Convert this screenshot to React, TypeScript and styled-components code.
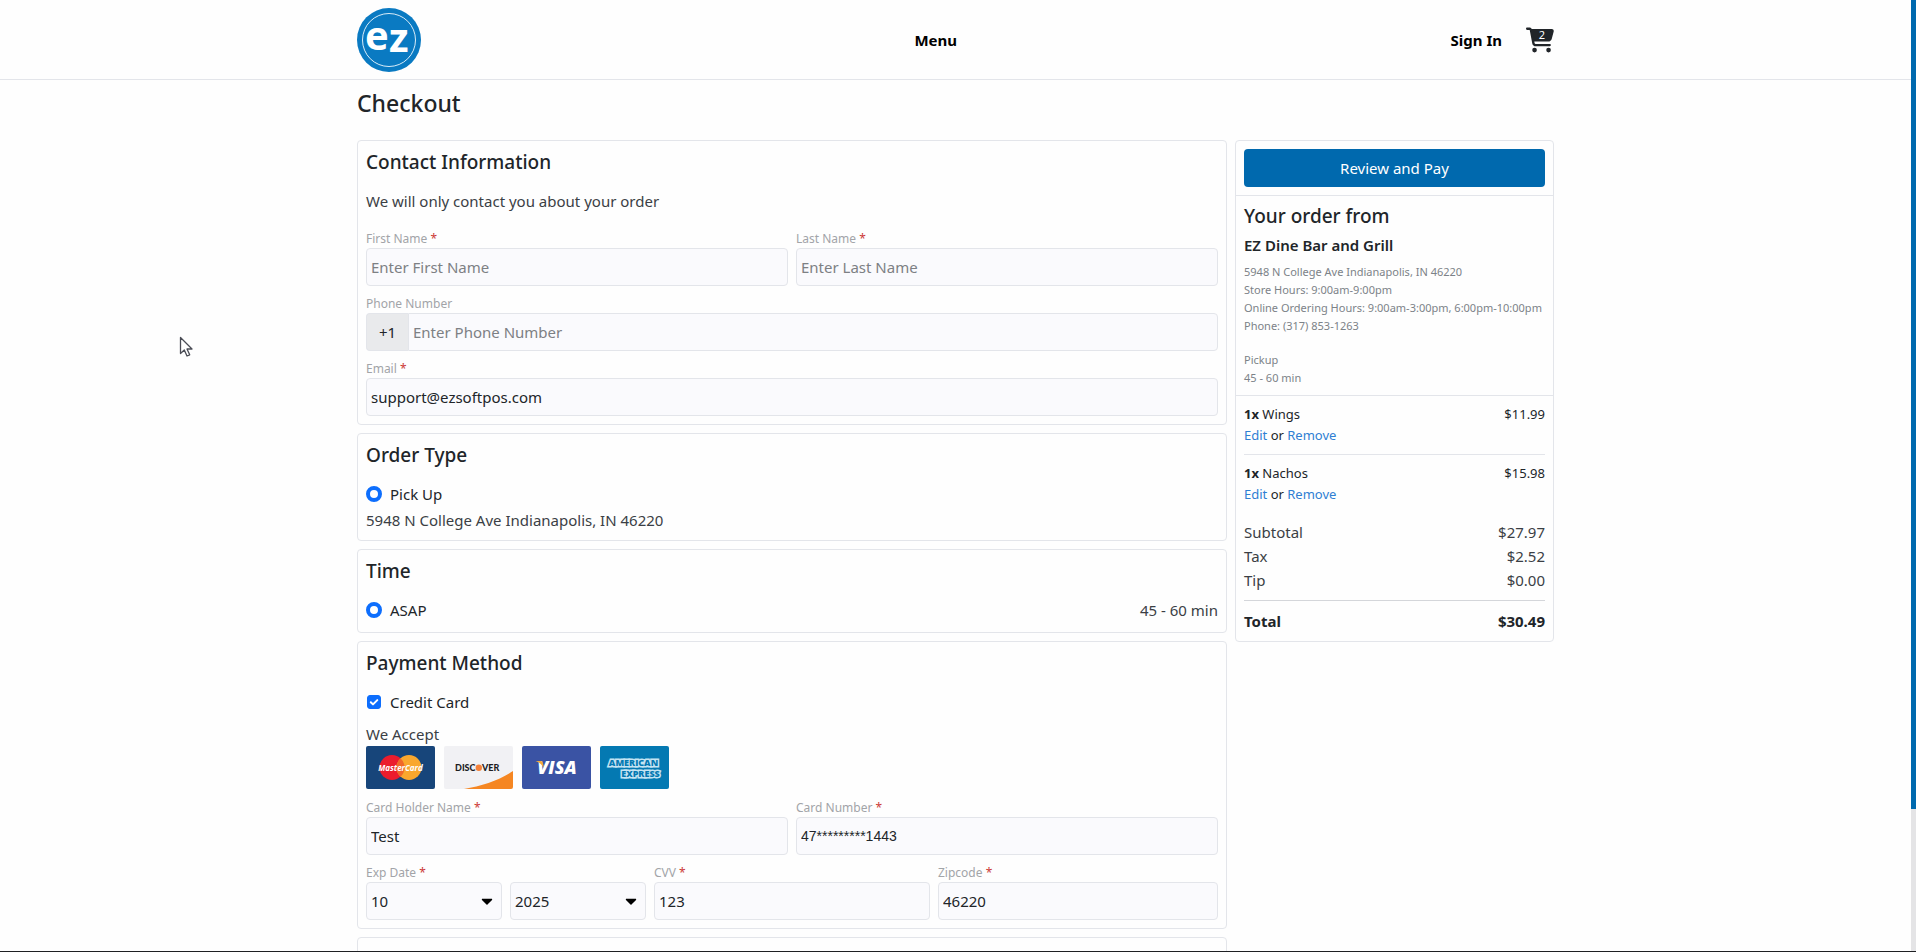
import React, { useState } from "react";
import styled, { createGlobalStyle } from "styled-components";
import { FaCartShopping } from "react-icons/fa6";
import { FaCaretDown } from "react-icons/fa";

const colors = {
  page: "#fefefe",
  line: "#e3e5ea",
  field: "#fafafd",
  ink: "#212529",
  body: "#3b3f45",
  muted: "#7c8288",
  label: "#a2a4a8",
  brand: "#0069ae",
  link: "#2f7fd3",
  blue: "#0d6efd",
  required: "#cc3a36",
};

const GlobalStyle = createGlobalStyle`
  *, *::before, *::after { box-sizing: border-box; }
  body {
    margin: 0;
    background: ${colors.page};
    color: ${colors.ink};
    font-family: "Noto Sans", "Open Sans", sans-serif;
    font-size: 15px;
    line-height: 24px;
  }
  h1, h2, h3, p { margin: 0; padding: 0; }
  button, input, select { font: inherit; color: inherit; }
`;

const Screen = styled.div`
  height: 100vh;
  overflow-y: auto;
  scrollbar-width: none;
  padding-right: 5px;
`;

const ScrollTrack = styled.div`
  position: fixed;
  top: 0;
  right: 0;
  bottom: 0;
  width: 5px;
  background: #e4e4e6;
`;

const ScrollThumb = styled.div`
  height: 85%;
  background: ${colors.brand};
`;

const BottomEdge = styled.div`
  position: fixed;
  left: 0;
  right: 0;
  bottom: 0;
  height: 1px;
  background: #1f2023;
`;

const Pointer = styled.svg`
  position: fixed;
  left: 179px;
  top: 336px;
  pointer-events: none;
`;

const Container = styled.div`
  max-width: 1197px;
  margin: 0 auto;
`;

const Header = styled.header`
  border-bottom: 1px solid ${colors.line};
`;

const HeaderRow = styled(Container)`
  display: flex;
  align-items: center;
  justify-content: space-between;
  height: 79px;
`;

const HomeLink = styled.a`
  display: block;
  height: 64px;
`;

const NavLink = styled.a`
  color: #000;
  font-weight: 700;
  text-decoration: none;
`;

const Account = styled.div`
  display: flex;
  align-items: center;
  gap: 24px;
`;

const CartButton = styled.button`
  position: relative;
  display: flex;
  padding: 0;
  border: 0;
  background: none;
  font-size: 28px;
  line-height: 24px;
  color: ${colors.ink};
`;

const CartCount = styled.span`
  position: absolute;
  top: 0;
  left: 0;
  right: 0;
  padding-left: 4px;
  text-align: center;
  font-size: 11px;
  line-height: 18px;
  color: #fff;
`;

const PageTitle = styled.h1`
  padding: 7px 0 21px;
  font-size: 23px;
  line-height: 32px;
  font-weight: 500;
`;

const Columns = styled.div`
  display: flex;
  align-items: flex-start;
  gap: 8px;
`;

const Main = styled.main`
  flex: 1;
  min-width: 0;
  display: flex;
  flex-direction: column;
  gap: 8px;
`;

const Card = styled.section`
  padding: 8px;
  border: 1px solid ${colors.line};
  border-radius: 4px;
`;

const EmptyCard = styled(Card)`
  min-height: 120px;
`;

const CardTitle = styled.h2`
  padding-top: 1px;
  margin-bottom: 15px;
  font-size: 19px;
  line-height: 24px;
  font-weight: 500;
`;

const Text = styled.p`
  color: ${colors.body};
`;

const FieldStack = styled.div<{ $top: number }>`
  display: flex;
  flex-direction: column;
  gap: 8px;
  margin-top: ${(p) => p.$top}px;
`;

const FieldRow = styled.div`
  display: flex;
  gap: 8px;
`;

const FieldBox = styled.div<{ $width?: number }>`
  flex: ${(p) => (p.$width ? `0 0 ${p.$width}px` : "1 1 0")};
  min-width: 0;
`;

const Label = styled.label`
  display: block;
  font-size: 12px;
  line-height: 19px;
  color: ${colors.label};
`;

const Required = styled.span`
  color: ${colors.required};
`;

const Input = styled.input<{ $plain?: boolean }>`
  display: block;
  width: 100%;
  height: 38px;
  padding: 0 4px;
  border: 1px solid ${colors.line};
  border-radius: 4px;
  background: ${colors.field};
  outline: none;
  ${(p) => p.$plain && `font-family: "Liberation Sans", sans-serif; font-size: 14px;`}
  &::placeholder { color: #7d8084; opacity: 1; }
`;

const PhoneGroup = styled.div`
  display: flex;
`;

const Prefix = styled.span`
  flex: 0 0 42px;
  display: flex;
  align-items: center;
  justify-content: center;
  border: 1px solid ${colors.line};
  border-right: 0;
  border-radius: 4px 0 0 4px;
  background: #e9eaec;
`;

const PhoneInput = styled(Input)`
  border-radius: 0 4px 4px 0;
`;

const SelectBox = styled.div`
  position: relative;
  flex: 1;
`;

const Select = styled.select`
  appearance: none;
  display: block;
  width: 100%;
  height: 38px;
  padding: 0 4px;
  border: 1px solid ${colors.line};
  border-radius: 4px;
  background: ${colors.field};
`;

const Caret = styled(FaCaretDown)`
  position: absolute;
  right: 6px;
  top: 10px;
  font-size: 18px;
  color: #000;
  pointer-events: none;
`;

const OptionRow = styled.div`
  display: flex;
  align-items: center;
  justify-content: space-between;
  margin-bottom: 2px;
  color: ${colors.body};
`;

const OptionLabel = styled.label`
  display: flex;
  align-items: center;
  gap: 8px;
  color: ${colors.ink};
`;

const Radio = styled.input`
  appearance: none;
  width: 16px;
  height: 16px;
  margin: 0;
  border: 1px solid #adb5bd;
  border-radius: 50%;
  background: #fff;
  &:checked { border: 4px solid ${colors.blue}; }
`;

const CheckBox = styled.span`
  position: relative;
  display: flex;
  padding: 0 1px;
  svg {
    position: absolute;
    left: 1px;
    top: 0;
    pointer-events: none;
  }
`;

const CheckInput = styled.input`
  appearance: none;
  width: 14px;
  height: 14px;
  margin: 0;
  border: 1px solid #adb5bd;
  border-radius: 3px;
  background: #fff;
  &:checked { border-color: ${colors.blue}; background: ${colors.blue}; }
`;

const AcceptText = styled(Text)`
  margin-top: 8px;
`;

const Brands = styled.div`
  display: flex;
  gap: 9px;
  height: 43px;
`;

const Sidebar = styled.aside`
  flex: 0 0 319px;
  border: 1px solid ${colors.line};
  border-radius: 4px;
`;

const Panel = styled.div`
  padding: 8px;
  & + & { border-top: 1px solid ${colors.line}; }
`;

const PayButton = styled.button`
  display: block;
  width: 100%;
  height: 38px;
  padding: 0;
  border: 0;
  border-radius: 4px;
  background: ${colors.brand};
  color: #fff;
`;

const OrderTitle = styled.h2`
  margin-bottom: 8px;
  font-size: 19px;
  line-height: 24px;
  font-weight: 500;
`;

const StoreName = styled.h3`
  margin-bottom: 8px;
  font-size: 15px;
  line-height: 19px;
  font-weight: 600;
`;

const Details = styled.p`
  font-size: 11px;
  line-height: 18px;
  white-space: nowrap;
  color: ${colors.muted};
  & + & { margin-top: 16px; }
`;

const Item = styled.div`
  font-size: 13px;
  line-height: 21px;
  & + & {
    margin-top: 8px;
    padding-top: 8px;
    border-top: 1px solid ${colors.line};
  }
`;

const Line = styled.div`
  display: flex;
  justify-content: space-between;
`;

const TextLink = styled.a`
  color: ${colors.link};
  text-decoration: none;
`;

const Totals = styled.div`
  margin-top: 15px;
  color: ${colors.body};
`;

const TotalLine = styled(Line)`
  margin-top: 8px;
  padding-top: 8px;
  border-top: 1px solid #d4d6da;
  font-weight: 700;
  color: ${colors.ink};
`;

function Logo() {
  return (
    <svg width="64" height="64" viewBox="0 0 64 64" role="img" aria-label="ez">
      <circle cx="32" cy="32" r="32" fill="#0a7ac2" />
      <circle cx="32" cy="32" r="26.5" fill="none" stroke="#d9ecf8" strokeWidth="1" />
      <g fontFamily="Open Sans, sans-serif" fontWeight="700" fontSize="40" fill="#fff">
        <text x="8" y="42">e</text>
        <text x="32" y="44">z</text>
      </g>
    </svg>
  );
}

function MasterCard() {
  return (
    <svg width="69" height="43" viewBox="0 0 69 43" role="img">
      <rect width="69" height="43" rx="2" fill="#17457a" />
      <circle cx="26" cy="21.5" r="12.5" fill="#eb1c2d" />
      <circle cx="43" cy="21.5" r="12.5" fill="#f9a72e" />
      <path d="M34.5 12.3a12.5 12.5 0 0 1 0 18.4a12.5 12.5 0 0 1 0-18.4z" fill="#f0682a" />
      <text x="34.5" y="25" textAnchor="middle" fontFamily="Open Sans, sans-serif" fontStyle="italic" fontWeight="700" fontSize="8" fill="#fff">
        MasterCard
      </text>
    </svg>
  );
}

function Discover() {
  return (
    <svg width="69" height="43" viewBox="0 0 69 43" role="img">
      <rect width="69" height="43" rx="2" fill="#f1f1f4" />
      <path d="M20 43C38 40 56 34 69 25v16a2 2 0 0 1-2 2z" fill="#f58622" />
      <g fontFamily="Lato, sans-serif" fontWeight="900" fontSize="9" fill="#1d1d1f">
        <text x="31.500" y="25" textAnchor="end">DISC</text>
        <text x="38" y="25">VER</text>
      </g>
      <circle cx="34.8" cy="21.8" r="3.2" fill="#f5813a" />
    </svg>
  );
}

function Visa() {
  return (
    <svg width="69" height="43" viewBox="0 0 69 43" role="img">
      <rect width="69" height="43" rx="2" fill="#3a53a4" />
      <text x="35" y="28" textAnchor="middle" fontFamily="Open Sans, sans-serif" fontStyle="italic" fontWeight="800" fontSize="18" fill="#fff">
        VISA
      </text>
      <path d="M13.500 15h5.500q1.500 0 1.800 1.500l1.200 5q-3-4.500-8.500-6.500z" fill="#f2a93c" />
    </svg>
  );
}

function Amex() {
  return (
    <svg width="69" height="43" viewBox="0 0 69 43" role="img">
      <rect width="69" height="43" rx="2" fill="#0479b2" />
      <g fontFamily="Open Sans, sans-serif" fontWeight="800" fontSize="9" fill="#0479b2" stroke="#c4e4f3" strokeWidth="3" paintOrder="stroke" textAnchor="middle">
        <text x="33.500" y="19.500">AMERICAN</text>
        <text x="40.500" y="30.500">EXPRESS</text>
      </g>
    </svg>
  );
}

type FieldProps = {
  id: string;
  label: string;
  required?: boolean;
  width?: number;
  value?: string;
  placeholder?: string;
  plain?: boolean;
};

function FieldLabel({ id, label, required }: { id: string; label: string; required?: boolean }) {
  return (
    <Label htmlFor={id}>
      {label} {required && <Required>*</Required>}
    </Label>
  );
}

function Field({ id, label, required, width, value, placeholder, plain }: FieldProps) {
  return (
    <FieldBox $width={width}>
      <FieldLabel id={id} label={label} required={required} />
      <Input id={id} defaultValue={value} placeholder={placeholder} $plain={plain} />
    </FieldBox>
  );
}

const items = [
  { name: "Wings", price: "$11.99" },
  { name: "Nachos", price: "$15.98" },
];

const sums = [
  ["Subtotal", "$27.97"],
  ["Tax", "$2.52"],
  ["Tip", "$0.00"],
];

export default function App() {
  const [card, setCard] = useState(true);

  return (
    <>
      <GlobalStyle />
      <Screen>
        <Header>
          <HeaderRow>
            <HomeLink href="#home">
              <Logo />
            </HomeLink>
            <NavLink href="#menu">Menu</NavLink>
            <Account>
              <NavLink href="#sign-in">Sign In</NavLink>
              <CartButton type="button">
                <FaCartShopping />
                <CartCount>2</CartCount>
              </CartButton>
            </Account>
          </HeaderRow>
        </Header>

        <Container>
          <PageTitle>Checkout</PageTitle>
          <Columns>
            <Main>
              <Card>
                <CardTitle>Contact Information</CardTitle>
                <Text>We will only contact you about your order</Text>
                <FieldStack $top={16}>
                  <FieldRow>
                    <Field id="first" label="First Name" required placeholder="Enter First Name" />
                    <Field id="last" label="Last Name" required placeholder="Enter Last Name" />
                  </FieldRow>
                  <FieldBox>
                    <FieldLabel id="phone" label="Phone Number" />
                    <PhoneGroup>
                      <Prefix>+1</Prefix>
                      <PhoneInput id="phone" type="tel" placeholder="Enter Phone Number" />
                    </PhoneGroup>
                  </FieldBox>
                  <Field id="email" label="Email" required value="support@ezsoftpos.com" />
                </FieldStack>
              </Card>

              <Card>
                <CardTitle>Order Type</CardTitle>
                <OptionRow>
                  <OptionLabel>
                    <Radio type="radio" name="order-type" defaultChecked />
                    Pick Up
                  </OptionLabel>
                </OptionRow>
                <Text>5948 N College Ave Indianapolis, IN 46220</Text>
              </Card>

              <Card>
                <CardTitle>Time</CardTitle>
                <OptionRow>
                  <OptionLabel>
                    <Radio type="radio" name="time" defaultChecked />
                    ASAP
                  </OptionLabel>
                  <span>45 - 60 min</span>
                </OptionRow>
              </Card>

              <Card>
                <CardTitle>Payment Method</CardTitle>
                <OptionRow>
                  <OptionLabel>
                    <CheckBox>
                      <CheckInput type="checkbox" checked={card} onChange={(e) => setCard(e.target.checked)} />
                      {card && (
                        <svg width="14" height="14" viewBox="0 0 14 14" fill="none" stroke="#fff" strokeWidth="2" strokeLinecap="round" strokeLinejoin="round">
                          <path d="M3.800 7.200l2.200 2.200 4.300-4.300" />
                        </svg>
                      )}
                    </CheckBox>
                    Credit Card
                  </OptionLabel>
                </OptionRow>
                <AcceptText>We Accept</AcceptText>
                <Brands>
                  <MasterCard />
                  <Discover />
                  <Visa />
                  <Amex />
                </Brands>
                <FieldStack $top={9}>
                  <FieldRow>
                    <Field id="holder" label="Card Holder Name" required value="Test" />
                    <Field id="number" label="Card Number" required value="47*********1443" plain />
                  </FieldRow>
                  <FieldRow>
                    <FieldBox $width={280}>
                      <FieldLabel id="month" label="Exp Date" required />
                      <FieldRow>
                        <SelectBox>
                          <Select id="month" defaultValue="10">
                            <option>10</option>
                            <option>11</option>
                            <option>12</option>
                          </Select>
                          <Caret />
                        </SelectBox>
                        <SelectBox>
                          <Select aria-label="Year" defaultValue="2025">
                            <option>2025</option>
                            <option>2026</option>
                            <option>2027</option>
                          </Select>
                          <Caret />
                        </SelectBox>
                      </FieldRow>
                    </FieldBox>
                    <Field id="cvv" label="CVV" required value="123" />
                    <Field id="zip" label="Zipcode" required width={280} value="46220" />
                  </FieldRow>
                </FieldStack>
              </Card>

              <EmptyCard />
            </Main>

            <Sidebar>
              <Panel>
                <PayButton type="button">Review and Pay</PayButton>
              </Panel>
              <Panel>
                <OrderTitle>Your order from</OrderTitle>
                <StoreName>EZ Dine Bar and Grill</StoreName>
                <Details>
                  5948 N College Ave Indianapolis, IN 46220
                  <br />
                  Store Hours: 9:00am-9:00pm
                  <br />
                  Online Ordering Hours: 9:00am-3:00pm, 6:00pm-10:00pm
                  <br />
                  Phone: (317) 853-1263
                </Details>
                <Details>
                  Pickup
                  <br />
                  45 - 60 min
                </Details>
              </Panel>
              <Panel>
                {items.map((item) => (
                  <Item key={item.name}>
                    <Line>
                      <span>
                        <b>1x</b> {item.name}
                      </span>
                      <span>{item.price}</span>
                    </Line>
                    <TextLink href="#edit">Edit</TextLink> or <TextLink href="#remove">Remove</TextLink>
                  </Item>
                ))}
                <Totals>
                  {sums.map(([name, amount]) => (
                    <Line key={name}>
                      <span>{name}</span>
                      <span>{amount}</span>
                    </Line>
                  ))}
                  <TotalLine>
                    <span>Total</span>
                    <span>$30.49</span>
                  </TotalLine>
                </Totals>
              </Panel>
            </Sidebar>
          </Columns>
        </Container>
      </Screen>
      <ScrollTrack>
        <ScrollThumb />
      </ScrollTrack>
      <BottomEdge />
      <Pointer width="14" height="22" viewBox="0 0 14 22">
        <path d="M1.500 1.500v16l3.800-3.500 2.700 6 2.700-1.200-2.700-5.800h5z" fill="#fff" stroke="#4a4c55" strokeWidth="1.300" strokeLinejoin="round" />
      </Pointer>
    </>
  );
}
